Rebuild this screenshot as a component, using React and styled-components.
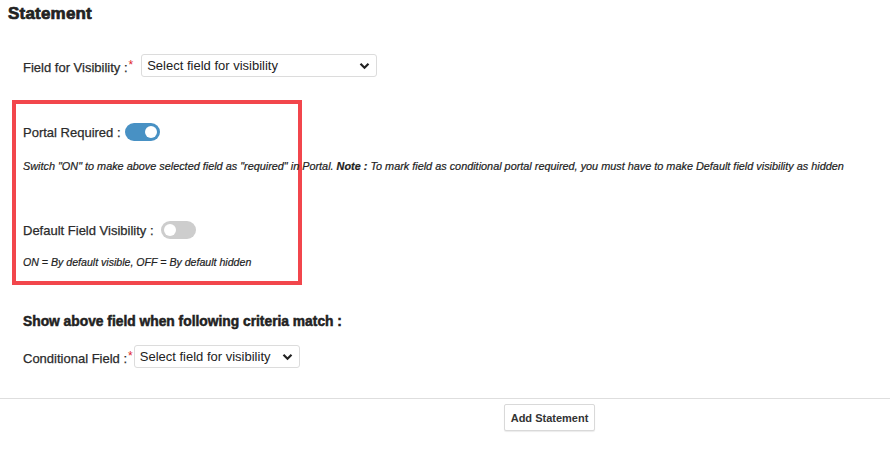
import React from 'react'
import styled, { createGlobalStyle } from 'styled-components'

const GlobalStyle = createGlobalStyle`
  body {
    margin: 0;
    background: #fff;
    font-family: "Liberation Sans", Arial, sans-serif;
    color: #333;
  }
`

const Page = styled.div`
  width: 890px;
  height: 449px;
  overflow: hidden;
`

const Title = styled.h3`
  margin: 4px 0 0 8px;
  font-size: 17px;
  line-height: 20px;
  font-weight: 700;
  letter-spacing: 0.2px;
  color: #222;
  -webkit-text-stroke: 0.7px #222;
`

const Row = styled.div`
  display: flex;
  align-items: center;
  height: ${p => p.h || 23}px;
  margin-top: ${p => p.top || 0}px;
  padding-left: ${p => p.left || 23}px;
`

const Label = styled.label`
  font-size: 13px;
  color: #2b2b2b;
  white-space: nowrap;
  -webkit-text-stroke: 0.25px #2b2b2b;
`

const Star = styled.sup`
  color: #e0262b;
  font-size: 12px;
  margin-left: 1px;
  position: relative;
  top: 2px;
  -webkit-text-stroke: 0;
`

const SelectWrap = styled.div`
  position: relative;
  margin-left: ${p => p.gap}px;
  width: ${p => p.w}px;
  height: 23px;
`

const Select = styled.select`
  appearance: none;
  width: 100%;
  height: 100%;
  border: 1px solid #dcdcdc;
  border-radius: 3px;
  background: #fff;
  font-family: "Liberation Sans", Arial, sans-serif;
  font-size: 13px;
  color: #222;
  padding: 0 0 0 5px;
  outline: none;
`

const Chevron = styled.svg`
  position: absolute;
  right: 7px;
  top: 8px;
  pointer-events: none;
`

const Highlight = styled.section`
  margin: 23px 0 0 12px;
  width: 275px;
  border: 4px solid #f2464c;
  padding: 19px 0 13px 7px;
`

const Toggle = styled.span`
  display: inline-flex;
  align-items: center;
  justify-content: ${p => (p.on ? 'flex-end' : 'flex-start')};
  width: 35px;
  height: 18px;
  border-radius: 9px;
  margin-left: ${p => p.gap}px;
  padding: 0 3px;
  box-sizing: border-box;
  background: ${p => (p.on ? '#4891c4' : '#cdcdcd')};
  &::after {
    content: '';
    width: 12px;
    height: 12px;
    border-radius: 50%;
    background: #fff;
  }
`

const ToggleRow = styled.div`
  display: flex;
  align-items: center;
  height: 18px;
  margin-top: ${p => p.top || 0}px;
`

const Help = styled.p`
  margin: ${p => p.top}px 0 0;
  font-size: ${p => p.size}px;
  line-height: 12px;
  font-style: italic;
  color: #222;
  white-space: nowrap;
  -webkit-text-stroke: 0.2px #222;
  b {
    font-weight: 700;
  }
`

const SubHeading = styled.h4`
  margin: 29px 0 0 23px;
  font-size: 13.8px;
  line-height: 15px;
  font-weight: 700;
  color: #222;
  -webkit-text-stroke: 0.5px #222;
`

const Divider = styled.hr`
  margin: 30px 0 0;
  border: 0;
  border-top: 1px solid #dedede;
`

const Footer = styled.div`
  display: flex;
  padding: 5px 0 0 504px;
`

const Button = styled.button`
  width: 91px;
  height: 27px;
  background: #fff;
  border: 1px solid #d9d9d9;
  border-radius: 2px;
  font-family: "Liberation Sans", Arial, sans-serif;
  font-size: 11px;
  font-weight: 700;
  color: #333;
  padding: 0;
  box-shadow: 0 1px 1px rgba(0, 0, 0, 0.08);
`

const Field = ({ label, w, gap, top }) => (
  <Row top={top}>
    <Label>
      {label}
      <Star>*</Star>
    </Label>
    <SelectWrap w={w} gap={gap}>
      <Select defaultValue="">
        <option value="">Select field for visibility</option>
      </Select>
      <Chevron width="11" height="8" viewBox="0 0 11 8">
        <path d="M1.5 1.8 L5.5 5.8 L9.5 1.8" fill="none" stroke="#222" strokeWidth="2.2" />
      </Chevron>
    </SelectWrap>
  </Row>
)

export default function App() {
  return (
    <Page>
      <GlobalStyle />
      <Title>Statement</Title>
      <Field label="Field for Visibility :" w={236} gap={8} top={30} />

      <Highlight>
        <ToggleRow>
          <Label>Portal Required :</Label>
          <Toggle on gap={4} />
        </ToggleRow>
        <Help top={19} size={10.87}>
          Switch "ON" to make above selected field as "required" in Portal. <b>Note :</b> To mark field as
          conditional portal required, you must have to make Default field visibility as hidden
        </Help>
        <ToggleRow top={49}>
          <Label>Default Field Visibility :</Label>
          <Toggle gap={7} />
        </ToggleRow>
        <Help top={17} size={10.6}>ON = By default visible, OFF = By default hidden</Help>
      </Highlight>

      <SubHeading>Show above field when following criteria match :</SubHeading>
      <Field label="Conditional Field :" w={166} gap={1} top={16} />

      <Divider />
      <Footer>
        <Button>Add Statement</Button>
      </Footer>
    </Page>
  )
}
